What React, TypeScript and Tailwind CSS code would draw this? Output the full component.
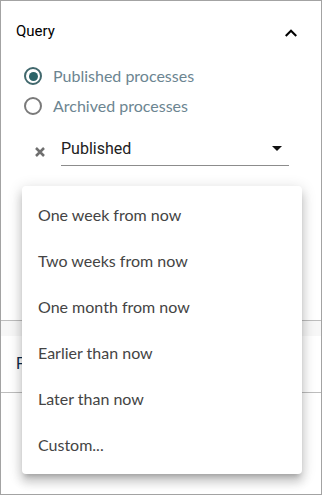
import React from "react";

const options = [
  "One week from now",
  "Two weeks from now",
  "One month from now",
  "Earlier than now",
  "Later than now",
  "Custom...",
];

function Radio({ checked, label }: { checked?: boolean; label: string }) {
  return (
    <div className="flex items-center h-[30px]">
      <span
        className={[
          "flex items-center justify-center w-[18px] h-[18px] rounded-full border-2",
          checked ? "border-[#41686d]" : "border-[#7a7a7a]",
        ].join(" ")}
      >
        {checked && <span className="w-[9px] h-[9px] rounded-full bg-[#2c6468]" />}
      </span>
      <span className="ml-[11px] text-[16px] text-[#6c8591] font-['Lato',sans-serif]">{label}</span>
    </div>
  );
}

export default function App() {
  return (
    <div className="relative w-[322px] h-[495px] border border-[#a3a3a3] bg-white overflow-hidden font-['Roboto',sans-serif]">
      {/* Query section */}
      <div className="h-[319px]">
        <div className="flex items-center justify-between h-[61px] pl-[15px] pr-[23px]">
          <span className="text-[15px] text-black">Query</span>
          <svg width="14" height="14" viewBox="0 0 24 24" className="mt-[2px]">
            <path d="M3 17l9-9 9 9" fill="none" stroke="#000" strokeWidth="3.5" />
          </svg>
        </div>
        <div className="pl-[23px] -mt-[1px]">
          <Radio checked label="Published processes" />
          <Radio label="Archived processes" />
        </div>
        <div className="flex items-center mt-[11px] pl-[33px] pr-[32px]">
          <svg width="12" height="12" viewBox="0 0 24 24" className="mt-[6px]">
            <path d="M4 4l16 16M20 4L4 20" stroke="#6f6f6f" strokeWidth="5" />
          </svg>
          <div className="ml-[15px] flex-1 flex items-center justify-between h-[34px] border-b border-[#8c8c8c]">
            <span className="text-[16px] text-[#212121]">Published</span>
            <svg width="10" height="5" viewBox="0 0 10 5" className="mr-[7px]">
              <path d="M0 0h10L5 5z" fill="#111" />
            </svg>
          </div>
        </div>
      </div>

      {/* Collapsed section */}
      <div className="border-t border-[#bdbdbd]">
        <div className="h-[15px] bg-[#f7f7f7]" />
        <div className="flex items-center h-[57px] pl-[15px] border-b border-[#bdbdbd]">
          <span className="text-[16px] text-[#0b2a4a]">F</span>
        </div>
      </div>

      {/* Menu */}
      <div className="absolute left-[21px] top-[185px] w-[280px] py-[6px] rounded-[4px] bg-white shadow-[0_5px_5px_-3px_rgba(0,0,0,0.2),0_8px_10px_1px_rgba(0,0,0,0.14),0_3px_14px_2px_rgba(0,0,0,0.12)]">
        {options.map(o => (
          <div key={o} className="flex items-center h-[46px] pl-[16px] text-[16px] text-[#444] font-['Lato',sans-serif]">
            {o}
          </div>
        ))}
      </div>
    </div>
  );
}
